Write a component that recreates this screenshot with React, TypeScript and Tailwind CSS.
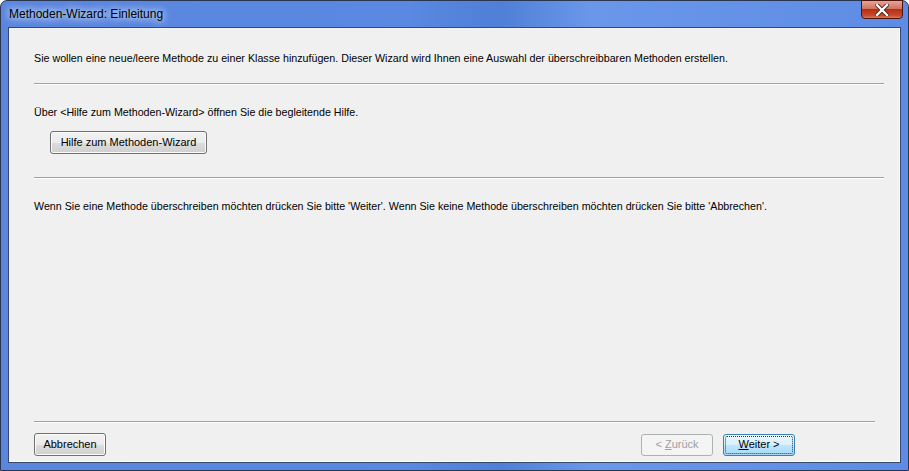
// Methoden-Wizard intro dialog, Vista style window chrome

const ui = "font-['Liberation_Sans',Arial,sans-serif]";

function Separator({ className = "" }: { className?: string }) {
  return <div className={`h-[2px] border-t border-[#a0a0a0] border-b border-b-white ${className}`} />;
}

function Button({
  children,
  className = "",
  disabled = false,
  focused = false,
}: {
  children: React.ReactNode;
  className?: string;
  disabled?: boolean;
  focused?: boolean;
}) {
  if (disabled) {
    return (
      <div
        className={`h-[22px] rounded-[3px] border border-[#adb2b5] bg-[#f4f4f4] flex items-center justify-center text-[11px] text-[#a0a0a0] ${className}`}
      >
        <span>{children}</span>
      </div>
    );
  }
  if (focused) {
    return (
      <div
        className={`h-[22px] rounded-[3px] border border-[#3c7fb1] p-[1px] bg-[linear-gradient(#eaf6fd_0%,#d9f0fc_50%,#bee6fd_51%,#a7d9f5_100%)] ${className}`}
      >
        <div className="h-full rounded-[2px] border border-dotted border-[#1a3f66] flex items-center justify-center text-[11px] text-black">
          <span>{children}</span>
        </div>
      </div>
    );
  }
  return (
    <div
      className={`h-[23px] rounded-[3px] border border-[#707070] bg-[linear-gradient(#f2f2f2_0%,#ebebeb_50%,#dddddd_51%,#cfcfcf_100%)] shadow-[inset_0_0_0_1px_#fcfcfc] flex items-center justify-center text-[11px] text-black ${className}`}
    >
      <span>{children}</span>
    </div>
  );
}

export default function App() {
  return (
    <div className={`w-[909px] h-[471px] overflow-hidden bg-white ${ui}`}>
      <div className="w-full h-full rounded-t-[7px] border border-[#2a3550] bg-[linear-gradient(90deg,#5a86dd_0%,#5a88e2_45%,#4f7fd6_55%,#6a97ea_65%,#5e8ce4_100%)] flex flex-col px-[7px] pb-[7px]">
        {/* title bar */}
        <div className="relative h-[26px] flex items-center">
          <span className="ml-[1px] text-[12px] text-black [text-shadow:0_0_6px_#dce8fb,0_0_10px_#dce8fb]">
            Methoden-Wizard: Einleitung
          </span>
          <div className="absolute right-[-2px] top-[-1px] w-[42px] h-[19px] rounded-b-[4px] border border-[#4a1410] bg-[linear-gradient(#e8a493_0%,#d1735f_45%,#b52f16_50%,#c74a2b_85%,#e07a54_100%)] flex items-center justify-center">
            <svg width="14" height="12" viewBox="0 0 14 12">
              <path d="M2 1 L12 11 M12 1 L2 11" stroke="#4a1a10" strokeWidth="4" strokeLinecap="square" />
              <path d="M2 1 L12 11 M12 1 L2 11" stroke="#ffffff" strokeWidth="2.4" strokeLinecap="square" />
            </svg>
          </div>
        </div>

        {/* client area */}
        <div className="flex-1 border border-[#35486e] bg-[#f0f0f0] shadow-[inset_-1px_-1px_0_#ffffff] flex flex-col pl-[25px] text-[10.7px] text-black">
          <p className="mt-[24px] h-[13px] leading-[13px]">
            Sie wollen eine neue/leere Methode zu einer Klasse hinzufügen. Dieser Wizard wird Ihnen eine Auswahl der
            überschreibbaren Methoden erstellen.
          </p>
          <Separator className="mt-[18px] mr-[16px]" />

          <p className="mt-[21px] h-[13px] leading-[13px]">
            Über &lt;Hilfe zum Methoden-Wizard&gt; öffnen Sie die begleitende Hilfe.
          </p>
          <Button className="mt-[12px] ml-[16px] w-[157px]">Hilfe zum Methoden-Wizard</Button>
          <Separator className="mt-[23px] mr-[16px]" />

          <p className="mt-[21px] h-[13px] leading-[13px]">
            Wenn Sie eine Methode überschreiben möchten drücken Sie bitte 'Weiter'. Wenn Sie keine Methode überschreiben
            möchten drücken Sie bitte 'Abbrechen'.
          </p>

          <div className="flex-1" />
          <Separator className="mr-[25px]" />
          <div className="mt-[10px] mb-[6px] flex items-center">
            <Button className="w-[72px]">Abbrechen</Button>
            <div className="flex-1" />
            <Button disabled className="w-[72px]">
              &lt; <span className="underline">Z</span>urück
            </Button>
            <Button focused className="ml-[10px] mr-[105px] w-[72px]">
              <span className="underline">W</span>eiter &gt;
            </Button>
          </div>
        </div>
      </div>
    </div>
  );
}
